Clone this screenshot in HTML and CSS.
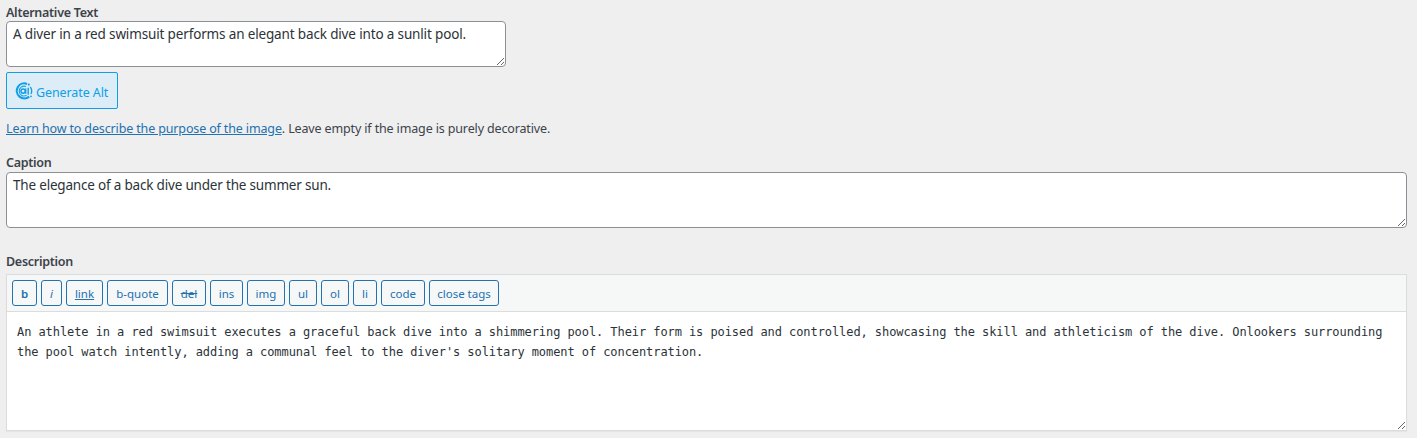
FILE: index.html
```html
<!DOCTYPE html>
<html lang="en">
<head>
<meta charset="utf-8">
<title>Edit Media</title>
<link rel="stylesheet" href="styles.css">
</head>
<body>
<main class="edit-media">
  <section class="field field-alt">
    <label class="label label-alt" for="alt">Alternative Text</label>
    <textarea class="input input-alt" id="alt" spellcheck="false">A diver in a red swimsuit performs an elegant back dive into a sunlit pool.</textarea>
    <button class="generate" type="button">
      <svg class="generate-icon" viewBox="0 0 18 18" fill="none" stroke="currentColor" aria-hidden="true">
        <path d="M12 1.9A7.5 7.5 0 1 0 14.2 14.6" stroke-width="2.1"/>
        <path d="M15.3 4.9A7.6 7.6 0 0 1 16.1 12" stroke-width="1.3"/>
        <path d="M11 4.6A4.9 4.9 0 1 0 11.6 13.3" stroke-width="1.1"/>
        <circle cx="8.1" cy="9.1" r="2.1" stroke-width="1.5"/>
        <path d="M10.7 6.4v5.3M13.2 5.8v7" stroke-width="1.4"/>
        <circle cx="13.8" cy="2.6" r="1.1" fill="currentColor" stroke="none"/>
        <circle cx="16" cy="14.3" r=".9" fill="currentColor" stroke="none"/>
      </svg>
      <span>Generate Alt</span>
    </button>
    <p class="hint"><a class="hint-link" href="#">Learn how to describe the purpose of the image</a><span class="hint-rest">. Leave empty if the image is purely decorative.</span></p>
  </section>
  <section class="field field-caption">
    <label class="label label-caption" for="caption">Caption</label>
    <textarea class="input input-caption" id="caption" spellcheck="false">The elegance of a back dive under the summer sun.</textarea>
  </section>
  <section class="field">
    <label class="label label-description" for="description">Description</label>
    <div class="editor">
      <div class="toolbar">
        <button class="tag tag-b" type="button">b</button>
        <button class="tag tag-i" type="button">i</button>
        <button class="tag tag-link" type="button">link</button>
        <button class="tag tag-quote" type="button">b-quote</button>
        <button class="tag tag-del" type="button">del</button>
        <button class="tag tag-ins" type="button">ins</button>
        <button class="tag tag-img" type="button">img</button>
        <button class="tag tag-ul" type="button">ul</button>
        <button class="tag tag-ol" type="button">ol</button>
        <button class="tag tag-li" type="button">li</button>
        <button class="tag tag-code" type="button">code</button>
        <button class="tag tag-close" type="button">close tags</button>
      </div>
      <textarea class="editor-text" id="description" spellcheck="false">An athlete in a red swimsuit executes a graceful back dive into a shimmering pool. Their form is poised and controlled, showcasing the skill and athleticism of the dive. Onlookers surrounding the pool watch intently, adding a communal feel to the diver's solitary moment of concentration.</textarea>
    </div>
  </section>
</main>
</body>
</html>
```
FILE: styles.css
```css
* { box-sizing: border-box; }
body {
  margin: 0;
  height: 438px;
  overflow: hidden;
  background: #efefef;
  color: #3c434a;
  font: 13px/20px "Noto Sans", "Open Sans", sans-serif;
}
button, textarea { font: inherit; margin: 0; }
.edit-media { padding: 3px 10px 0 6px; }
.field { display: flex; flex-direction: column; align-items: flex-start; }
.field-alt { height: 150px; }
.field-caption { height: 99px; }
.label { height: 18px; line-height: 20px; font-weight: 600; font-size: 12.5px; letter-spacing: -.28px; }
.label-caption { height: 19px; }
.label-description { height: 22px; line-height: 19px; }
.input {
  padding: 2px 6px;
  border: 1px solid #8c8f94;
  border-radius: 4px;
  background: #fff;
  color: #2c3338;
  font-size: 13.5px;
  resize: both;
  overflow: auto;
}
.input-alt { width: 500px; height: 46px; letter-spacing: -.15px; }
.input-caption { width: 1401px; height: 56px; letter-spacing: -.19px; }
.generate {
  display: flex;
  align-items: center;
  gap: 3px;
  width: 112px;
  height: 37px;
  margin-top: 5px;
  padding: 4px 0 0 8px;
  border: 1px solid #119ee6;
  border-radius: 2px;
  background: #dcedf8;
  color: #119ee6;
  font-size: 12.5px;
  letter-spacing: -.1px;
  white-space: nowrap;
}
.generate-icon { width: 18px; height: 18px; margin-top: -3px; }
.hint { margin: 10px 0 0; font-size: 12.5px; letter-spacing: -.14px; white-space: nowrap; }
.hint-link { color: #2271b1; text-decoration: underline; }
.editor { width: 1401px; height: 157px; border: 1px solid #dcdcde; box-shadow: 0 1px 1px rgba(0, 0, 0, .04); background: #fff; }
.toolbar {
  display: flex;
  gap: 4px;
  height: 37px;
  padding: 5px;
  background: #f6f7f7;
  border-bottom: 1px solid #dcdcde;
}
.tag {
  height: 26px;
  padding: 1px 0 0;
  border: 1px solid #2271b1;
  border-radius: 3px;
  background: #f6f7f7;
  color: #2271b1;
  font-size: 11.5px;
  line-height: 23px;
  white-space: nowrap;
}
.tag-b { width: 25px; font-weight: 600; }
.tag-i { width: 21px; font-style: italic; }
.tag-link { width: 37px; text-decoration: underline; }
.tag-quote { width: 61px; }
.tag-del { width: 34px; text-decoration: line-through; }
.tag-ins { width: 33px; }
.tag-img { width: 38px; }
.tag-ul, .tag-ol { width: 28px; }
.tag-li { width: 24px; }
.tag-code { width: 44px; }
.tag-close { width: 70px; }
.editor-text {
  display: block;
  width: 100%;
  height: 118px;
  padding: 10px;
  border: 0;
  background: #fff;
  color: #2c3338;
  font: 12px/20px "DejaVu Sans Mono", monospace;
  letter-spacing: -.076px;
  resize: vertical;
}
```
